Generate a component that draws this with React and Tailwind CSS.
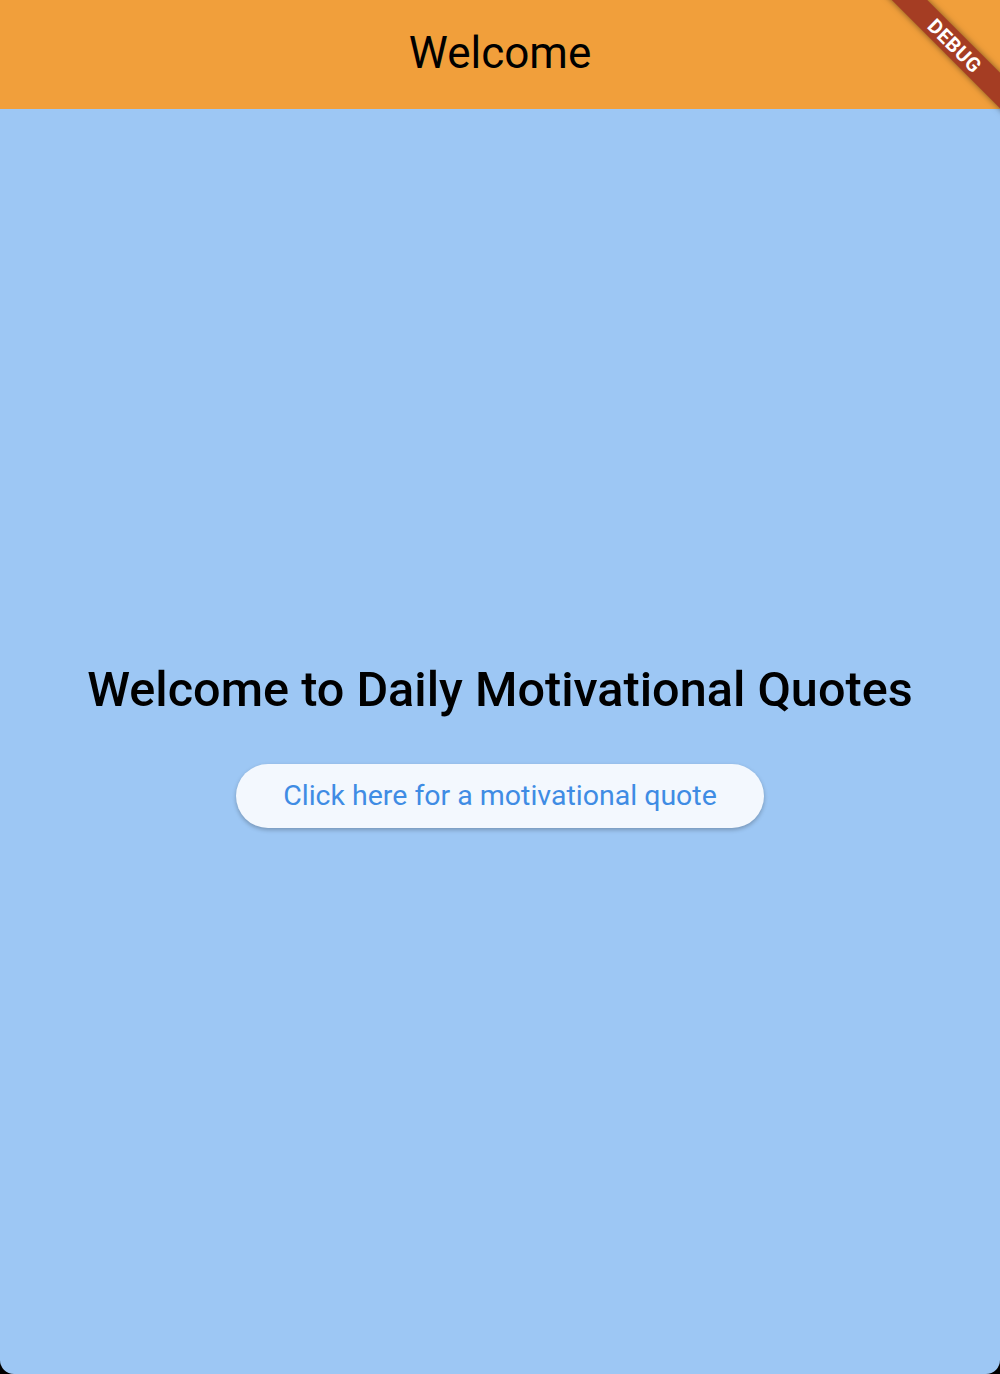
import React from 'react';

const DebugBanner = () => (
  <div className="pointer-events-none absolute inset-0 overflow-hidden">
    <div className="absolute left-[855px] top-[33px] flex h-[25px] w-[200px] rotate-45 items-center justify-center bg-[#A53D23] shadow-[0_0_6px_rgba(0,0,0,0.5)]">
      <span className="text-[20px] font-bold leading-none tracking-[0.5px] text-white">DEBUG</span>
    </div>
  </div>
);

const App = () => {
  return (
    <div className="relative h-[1374px] w-full bg-black font-['Roboto',sans-serif]">
      <div className="flex h-full flex-col overflow-hidden rounded-b-[14px] bg-[#9DC7F4]">
        {/* App bar */}
        <header className="flex h-[109px] shrink-0 items-center justify-center bg-[#F19F3B] pb-[4px]">
          <h1 className="text-[44px] font-normal leading-none text-black">Welcome</h1>
        </header>

        {/* Body */}
        <main className="flex flex-1 flex-col items-center justify-center gap-[46px] pt-[7px]">
          <h2 className="text-[48.6px] font-medium leading-[56px] text-black">
            Welcome to Daily Motivational Quotes
          </h2>
          <button className="flex h-[64px] w-[528px] items-center justify-center rounded-full bg-[#F3F8FE] text-[28.5px] text-[#3F8CE4] shadow-[0_2px_4px_rgba(0,0,0,0.25)]">
            Click here for a motivational quote
          </button>
        </main>
      </div>
      <DebugBanner />
    </div>
  );
};

export default App;
